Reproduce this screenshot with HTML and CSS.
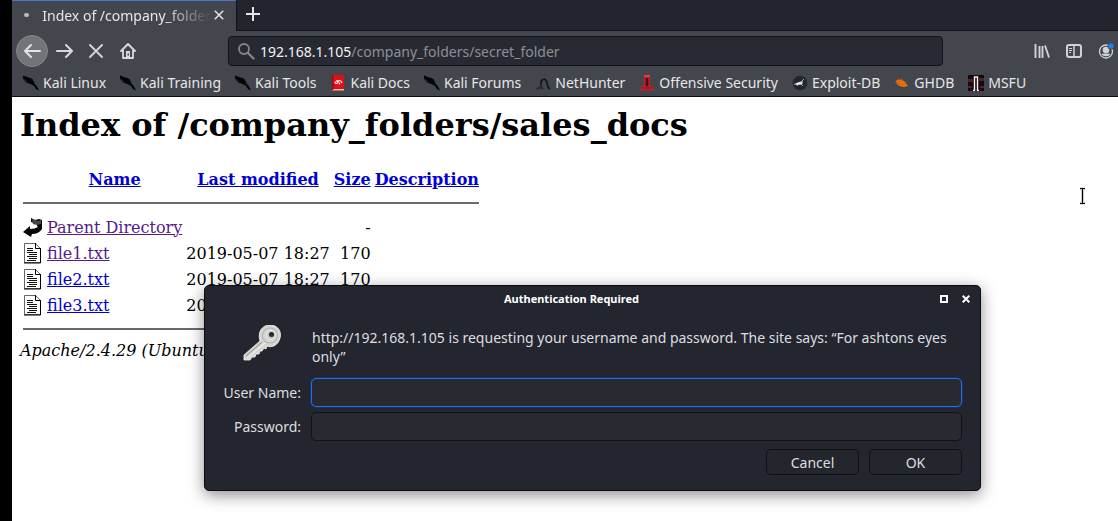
FILE: index.html
```html
<!DOCTYPE html>
<html lang="en">
<head>
<meta charset="utf-8">
<title>Index of /company_folders/sales_docs</title>
<link rel="stylesheet" href="styles.css">
</head>
<body>
<svg class="defs" aria-hidden="true">
  <symbol id="kali" viewBox="0 0 16 16"><path d="M0 .5l4 1.500 3 1 2 1.500 2 2-.5 2L13 10l1.500 2.500L16 15.500l-3-1.500-2-3-2.500-1.500L5 8 2.500 5 0 3z" fill="#030304"/><path d="M0 3l3 4 2 1M7 3l3 2M9 8l3 0" fill="none" stroke="#0b0b0d" stroke-width="1"/></symbol>
  <symbol id="file" viewBox="0 0 20 22"><path d="M1.500 1.500h11l5 5v14h-16z" fill="#fff" stroke="#666"/><path d="M12.500 1v5.500h5.500M17.500 6.500v14.500H1" fill="none" stroke="#000"/><path d="M4 6.500h6M4 8.500h6M4 10.500h10M6 12.500h8M4 14.500h10M6 16.500h8M4 18.500h9" stroke="#111" fill="none"/></symbol>
</svg>
<div class="browser">
  <header class="chrome">
    <div class="tabs">
      <div class="tab">
        <span class="dot"></span>
        <span class="tab-title">Index of /company_folder</span>
        <button class="plain" aria-label="Close tab"><svg width="10" height="10" viewBox="0 0 10 10"><path d="M.8.8l8.400 8.400M9.200.8L.8 9.200" stroke="#dedfe1" stroke-width="1.600"/></svg></button>
      </div>
      <button class="plain new-tab" aria-label="New tab"><svg width="14" height="14" viewBox="0 0 14 14"><path d="M7 0v14M0 7h14" stroke="#e4e5e7" stroke-width="2"/></svg></button>
    </div>
    <nav class="toolbar">
      <button class="plain tool back" aria-label="Back"><svg width="18" height="16" viewBox="0 0 18 16"><path d="M17 8H2M8 2L2 8l6 6" fill="none" stroke="#e2e3e5" stroke-width="2" stroke-linecap="round" stroke-linejoin="round"/></svg></button>
      <button class="plain tool" aria-label="Forward"><svg width="18" height="16" viewBox="0 0 18 16"><path d="M2 8h14.500M11 2l6 6-6 6" fill="none" stroke="#d8d9dc" stroke-width="2" stroke-linecap="round" stroke-linejoin="round"/></svg></button>
      <button class="plain tool" aria-label="Stop"><svg width="16" height="16" viewBox="0 0 16 16"><path d="M2 2l12 12M14 2L2 14" stroke="#d0d2d5" stroke-width="2" stroke-linecap="round"/></svg></button>
      <button class="plain tool" aria-label="Home"><svg width="16" height="16" viewBox="0 0 16 16"><path d="M1 8l7-7 7 7M3 7v8h10V7" fill="none" stroke="#d8d9dc" stroke-width="1.800" stroke-linecap="round" stroke-linejoin="round"/><path d="M6 8h4v7H6z" fill="#d8d9dc"/><path d="M7.500 10.500h1.500v2H7.500z" fill="#43454b"/></svg></button>
      <a class="address" href="#">
        <svg width="18" height="18" viewBox="0 0 18 18"><circle cx="7" cy="7" r="5" fill="none" stroke="#85878c" stroke-width="1.800"/><path d="M11 11l5.500 5.500" stroke="#85878c" stroke-width="2.200" stroke-linecap="round"/></svg>
        <span class="url"><span class="host">192.168.1.105</span>/company_folders/secret_folder</span>
      </a>
      <div class="actions">
        <button class="plain tool" aria-label="Library"><svg width="16" height="16" viewBox="0 0 16 16"><path d="M1.500 1v14M5.500 3v12M8.500 3v12M11 2.500L15 14.500" fill="none" stroke="#d0d2d5" stroke-width="1.900"/></svg></button>
        <button class="plain tool" aria-label="Sidebars"><svg width="16" height="16" viewBox="0 0 16 16"><rect x="1" y="2" width="14" height="12" rx="2" fill="none" stroke="#d0d2d5" stroke-width="2"/><path d="M8 2v12" stroke="#d0d2d5" stroke-width="1.500"/><path d="M3 5.500h3M3 7.500h3M3 9.500h2" stroke="#d0d2d5"/></svg></button>
        <button class="plain tool" aria-label="Account"><svg width="16" height="16" viewBox="0 0 16 16"><circle cx="8" cy="8.500" r="6.500" fill="none" stroke="#d0d2d5" stroke-width="1.300"/><circle cx="8" cy="7" r="3.300" fill="#d0d2d5"/><path d="M3.500 11c1-.8 8-.8 9 0-1.500 3-7.500 3-9 0z" fill="#d0d2d5"/><circle cx="13" cy="3" r="3.500" fill="#43454b"/><circle cx="13" cy="3" r="2.700" fill="#1683ef"/></svg></button>
      </div>
    </nav>
    <nav class="bookmarks">
      <a href="#"><svg><use href="#kali"/></svg>Kali Linux</a>
      <a href="#"><svg><use href="#kali"/></svg>Kali Training</a>
      <a href="#"><svg><use href="#kali"/></svg>Kali Tools</a>
      <a href="#"><svg viewBox="0 0 16 16"><path d="M2 0h12v14H2z" fill="#df1118"/><path d="M2 14h12v1.500H2z" fill="#e9bcbc"/><path d="M2 0h1.500v15H2z" fill="#9f0c12"/><path d="M5 6.500q0 2 1.500 2T8 7t1.500-1.500T12 8M7 5v2M9.500 7.500v2" fill="none" stroke="#fff" stroke-width="1.200"/></svg>Kali Docs</a>
      <a href="#"><svg><use href="#kali"/></svg>Kali Forums</a>
      <a href="#"><svg viewBox="0 0 16 16"><path d="M6 13V8c0-4 5-6 6 0 .5 3 1 5 3 6M2 14l4-2" fill="none" stroke="#141619" stroke-width="1.700"/><path d="M1 14h8l-3-4z" fill="#2b2e33"/></svg>NetHunter</a>
      <a href="#"><svg viewBox="0 0 16 16"><path d="M5 0h6v9l5 6.500H0L5 9z" fill="#c0202a"/><path d="M7 3.500h2V11H7z" fill="#260e12" stroke="#62151b"/><path d="M3.500 13h9" stroke="#7a141c"/><path d="M5 0h6v2H5z" fill="#e43b44"/></svg>Offensive Security</a>
      <a href="#"><svg viewBox="0 0 16 16"><circle cx="8" cy="8" r="7.300" fill="#23262b"/><path d="M2 9.500L6 8l5-2M6 9l-1 2M9 9l2 2M10 6l2-2" fill="none" stroke="#ccc" stroke-width=".8"/><path d="M3 9l3-1.500 4-.5 1 1-2 1.500-4 .5z" fill="#eee"/></svg>Exploit-DB</a>
      <a href="#"><svg viewBox="0 0 16 16"><path d="M2 6c3-3 7-1 9 1l3 4-4 1c-3 0-5-1-7-3z" fill="#ed700e"/><path d="M4 4l2 3M8 3v4M3 10l4-2M7 12l2-3M1 7l4 1M12 7l-2 3" stroke="#d55b09" stroke-width=".8"/></svg>GHDB</a>
      <a href="#"><svg viewBox="0 0 16 16"><path d="M0 0h16v16H0z" fill="#150b0e"/><path d="M0 4h5v3H0zM11 3h5v3h-5zM0 11h4v2H0zM12 11h4v2h-4z" fill="#552127"/><path d="M5 15.500h1.500V2h3v13.500H11" fill="none" stroke="#f2efef" stroke-width="1.400"/></svg>MSFU</a>
    </nav>
  </header>

  <main class="page">
    <h1>Index of /company_folders/sales_docs</h1>
    <table>
      <tr><th class="icon"></th><th><a href="#">Name</a></th><th><a href="#">Last modified</a></th><th><a href="#">Size</a></th><th><a href="#">Description</a></th></tr>
      <tr><td colspan="5"><hr></td></tr>
      <tr><td class="icon"><svg width="20" height="22" viewBox="0 0 20 22"><path d="M8 2l4 2 4-1 3 1v9q-3 5-10 5l-1 3-8-5 7-6v3q5 0 8-2l-1-1V8l-6-2z" fill="#080808"/><path d="M9 3l1 5 4 1 4-1V4l-3 1z" fill="#45484a"/></svg></td><td><a class="visited" href="#">Parent Directory</a></td><td></td><td class="num">-</td><td></td></tr>
      <tr><td class="icon"><svg width="20" height="22"><use href="#file"/></svg></td><td><a class="visited" href="#">file1.txt</a></td><td class="num">2019-05-07 18:27</td><td class="num">170</td><td></td></tr>
      <tr><td class="icon"><svg width="20" height="22"><use href="#file"/></svg></td><td><a href="#">file2.txt</a></td><td class="num">2019-05-07 18:27</td><td class="num">170</td><td></td></tr>
      <tr><td class="icon"><svg width="20" height="22"><use href="#file"/></svg></td><td><a href="#">file3.txt</a></td><td class="num">2019-05-07 18:27</td><td class="num">170</td><td></td></tr>
      <tr><td colspan="5"><hr></td></tr>
    </table>
    <address>Apache/2.4.29 (Ubuntu)</address>
  </main>
</div>

<svg class="pointer" width="9" height="18" viewBox="0 0 9 18" aria-hidden="true"><path d="M2 2h5M4.500 2v14M2 16h5" fill="none" stroke="#ccc" stroke-width="3"/><path d="M2 1.500h5M4.500 1.500v15M2 16.500h5" fill="none" stroke="#000"/></svg>

<form class="dialog" role="dialog" aria-labelledby="dialog-title">
  <div class="titlebar">
    <h2 id="dialog-title">Authentication Required</h2>
    <button type="button" class="plain" aria-label="Maximize"><svg width="8" height="8" viewBox="0 0 8 8"><path d="M1 1h6v6H1z" fill="none" stroke="#fff" stroke-width="2"/></svg></button>
    <button type="button" class="plain" aria-label="Close"><svg width="8" height="8" viewBox="0 0 8 8"><path d="M.7.7l6.600 6.600M7.300.7L.7 7.300" stroke="#fff" stroke-width="2"/></svg></button>
  </div>
  <div class="fields">
    <svg class="key" width="38" height="36" viewBox="0 0 38 36"><path d="M17 16C14 6 20 0 27 0c8 0 12 7 10 13-2 8-9 10-13 8l-1 3-2-1-2 3-2 0-1 3-3 0-1 3-3 0-2 3-6 0v-5z" fill="#d5d5d2" stroke="#f6f6f4" stroke-width=".8"/><circle cx="27" cy="10.500" r="7.500" fill="none" stroke="#b3b3b0" stroke-width="1.200"/><path d="M3 31L19 17" stroke="#a3a39f" stroke-width="1.300"/><path d="M4 33L22 18" stroke="#f3f3f0"/><circle cx="28" cy="10" r="4.500" fill="#c4c4c1" stroke="#efefec"/><circle cx="28.500" cy="9.500" r="2.500" fill="#24272d"/></svg>
    <p>http://192.168.1.105 is requesting your username and password. The site says: “For ashtons eyes only”</p>
    <label for="user">User Name:</label>
    <input id="user" class="active" type="text">
    <label for="pass">Password:</label>
    <input id="pass" type="password">
  </div>
  <div class="buttons"><button type="button">Cancel</button><button type="submit">OK</button></div>
</form>
</body>
</html>
```

FILE: styles.css
```css
* { box-sizing: border-box; }
body {
  margin: 0;
  min-height: 100vh;
  display: flex;
  padding-left: 12px;
  background: #000;
  overflow: hidden;
  font-family: "Noto Sans", sans-serif;
  font-size: 14px;
}
.defs { position: absolute; width: 0; height: 0; }
svg { display: block; flex: none; }
.plain {
  display: flex;
  align-items: center;
  justify-content: center;
  padding: 0;
  border: 0;
  background: none;
}
.browser { flex: 1; min-width: 0; display: flex; flex-direction: column; }
.chrome { background: #43464c; border-bottom: 1px solid #0c0c0f; color: #e6e6e8; }
.tabs { display: flex; height: 31px; background: #22252d; }
.tab {
  display: flex;
  align-items: center;
  width: 224px;
  padding: 0 12px 2px;
  background: #43464c;
  border-top: 1px solid #4876c8;
}
.dot { width: 6px; height: 4px; border-radius: 2px; background: #b9bbbf; margin-right: 13px; }
.tab-title {
  flex: 1;
  white-space: nowrap;
  margin-right: 3px;
  -webkit-mask-image: linear-gradient(to right, #000 72%, transparent);
  mask-image: linear-gradient(to right, #000 72%, transparent);
}
.new-tab { flex: 1; justify-content: flex-start; padding: 0 0 2px 9px; border-left: 1px solid #101217; border-bottom: 1px solid #101217; }
.toolbar { display: flex; align-items: center; height: 41px; padding: 0 4px 1px; }
.tool { width: 32px; height: 32px; }
.back { border-radius: 50%; background: #727479; border: 1px solid #85878b; }
.address {
  flex: 1;
  display: flex;
  align-items: center;
  gap: 5px;
  height: 30px;
  margin: 0 83px 0 84px;
  padding: 0 8px;
  border: 1px solid #101219;
  border-radius: 4px;
  background: #282a33;
  color: #8d8f95;
  text-decoration: none;
}
.host { color: #f3f3f5; }
.actions { display: flex; margin-right: -8px; }
.bookmarks { display: flex; gap: 14px; height: 24px; padding: 0 11px 3px; }
.bookmarks a { display: flex; align-items: center; gap: 4px; white-space: nowrap; color: inherit; text-decoration: none; }
.bookmarks svg { width: 16px; height: 16px; }
.page { flex: 1; padding: 9px 8px; background: #fff; color: #000; font-family: "DejaVu Serif", serif; font-size: 16px; }
.page h1 { margin: 0 0 21px; font-size: 32px; line-height: 38px; }
.page table { border-spacing: 2px; }
.page td, .page th { padding: 1px; height: 24px; line-height: 19px; white-space: nowrap; }
.page td[colspan] { height: 20px; }
.page .icon { width: 22px; }
.page hr { height: 2px; margin: 8px 0; border: 0; background: #6a6a6a; }
.page a { color: #0000d4; }
.page a.visited { color: #551a8b; }
.page .num { text-align: right; }
.page address { line-height: 19px; }
.pointer { position: absolute; left: 1078px; top: 187px; }
.dialog {
  position: absolute;
  left: 204px;
  right: 137px;
  top: 285px;
  padding: 0 18px 15px 20px;
  background: #23262e;
  border: 1px solid #0b0c0f;
  border-radius: 5px;
  box-shadow: 0 4px 16px rgba(0, 0, 0, .45);
  color: #dedee0;
}
.titlebar { display: flex; align-items: center; gap: 14px; height: 26px; margin-right: -8px; }
.titlebar h2 { flex: 1; margin: 0; padding-right: 8px; color: #fff; font-size: 11px; line-height: 16px; text-align: center; }
.fields { display: grid; grid-template-columns: 76px 1fr; column-gap: 10px; row-gap: 5px; align-items: center; padding-top: 16px; }
.fields p { margin: 0 0 7px; padding-left: 1px; line-height: 19px; }
.key { align-self: start; justify-self: end; margin: -3px 20px 0 0; }
.fields label { justify-self: end; white-space: nowrap; }
.fields input {
  width: 100%;
  height: 29px;
  border: 1px solid #101217;
  border-radius: 5px;
  background: #282a32;
  color: #eee;
  font: inherit;
  outline: none;
}
.fields .active { border-color: #2a6de0; box-shadow: 0 0 0 1px #11336f; }
.buttons { display: flex; justify-content: flex-end; gap: 10px; margin-top: 8px; }
.buttons button {
  width: 93px;
  height: 26px;
  padding: 0;
  border: 1px solid #0d0f13;
  border-radius: 5px;
  background: #23262d;
  color: #dedee0;
  font: inherit;
}
```
